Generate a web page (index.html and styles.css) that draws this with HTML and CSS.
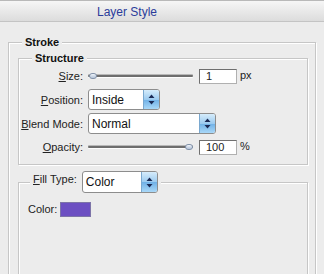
FILE: index.html
```html
<!DOCTYPE html>
<html>
<head>
<meta charset="utf-8">
<link rel="stylesheet" href="styles.css">
</head>
<body>
<div class="titlebar"><span class="title">Layer Style</span></div>
<div class="content">
  <fieldset class="group outer">
    <legend class="legend bold">Stroke</legend>
    <div class="outer-body">
      <fieldset class="group">
        <legend class="legend bold">Structure</legend>
        <div class="form">
          <label class="lbl"><u>S</u>ize:</label>
          <div class="ctrl">
            <div class="slider"><div class="track"></div><div class="thumb thumb-left"></div></div>
            <div class="num">1</div>
            <span class="unit">px</span>
          </div>
          <label class="lbl"><u>P</u>osition:</label>
          <div class="ctrl">
            <div class="select sel-pos"><span class="sel-text">Inside</span><span class="sel-btn"><svg width="7" height="11" viewBox="0 0 7 11"><path d="M3.5 0.5 L6.5 4 L0.5 4 Z M0.5 7 L6.5 7 L3.5 10.5 Z" fill="#1b2a55"/></svg></span></div>
          </div>
          <label class="lbl"><u>B</u>lend Mode:</label>
          <div class="ctrl">
            <div class="select sel-blend"><span class="sel-text">Normal</span><span class="sel-btn"><svg width="7" height="11" viewBox="0 0 7 11"><path d="M3.5 0.5 L6.5 4 L0.5 4 Z M0.5 7 L6.5 7 L3.5 10.5 Z" fill="#1b2a55"/></svg></span></div>
          </div>
          <label class="lbl"><u>O</u>pacity:</label>
          <div class="ctrl">
            <div class="slider slider-op"><div class="track"></div><div class="thumb thumb-right"></div></div>
            <div class="num">100</div>
            <span class="unit">%</span>
          </div>
        </div>
      </fieldset>
      <fieldset class="group fill">
        <legend class="legend fill-legend">
          <span class="fill-lbl"><u>F</u>ill Type:</span>
          <span class="select sel-fill"><span class="sel-text">Color</span><span class="sel-btn"><svg width="7" height="11" viewBox="0 0 7 11"><path d="M3.5 0.5 L6.5 4 L0.5 4 Z M0.5 7 L6.5 7 L3.5 10.5 Z" fill="#1b2a55"/></svg></span></span>
        </legend>
        <div class="fill-body">
          <span class="color-lbl">Color:</span>
          <span class="swatch"></span>
        </div>
      </fieldset>
    </div>
  </fieldset>
</div>
</body>
</html>
```
FILE: styles.css
```css
html, body {
  margin: 0;
  padding: 0;
  background: #ececec;
  overflow: hidden;
}
body {
  font-family: "Liberation Sans", Arial, sans-serif;
  font-size: 11px;
  color: #222;
  width: 324px;
  height: 274px;
}
u { text-decoration: underline; }

.titlebar {
  border-top: 1px solid #b9b9b9;
  border-bottom: 1px solid #c4c4c4;
  background: linear-gradient(#f6f6f6, #dcdcdc);
  height: 20px;
  padding-left: 97px;
}
.title {
  display: block;
  font-size: 12px;
  line-height: 23px;
  color: #2b3c9a;
}

.content {
  padding: 13px 8px 0 8px;
}

.group {
  margin: 0;
  padding: 0;
  border: 1px solid #c6c6c6;
  box-shadow: 1px 1px 0 #fff, inset 1px 1px 0 #fff;
  min-width: 0;
}
.legend {
  margin-left: 13px;
  padding: 0 3px;
  line-height: 14px;
  background: #ececec;
}
.bold { font-weight: bold; color: #111; }

.outer-body {
  padding: 2px 7px 0 9px;
}

.form {
  display: grid;
  grid-template-columns: 64px 1fr;
  column-gap: 5px;
  row-gap: 3px;
  padding: 1px 0 7px 0;
  align-items: center;
}
.lbl {
  text-align: right;
  white-space: nowrap;
}
.ctrl {
  display: flex;
  align-items: center;
  min-height: 20px;
}

.slider {
  position: relative;
  width: 105px;
  height: 8px;
  margin-right: 6px;
}
.track {
  position: absolute;
  left: 0;
  right: 0;
  top: 3px;
  height: 2px;
  background: #6e6e6e;
  border-radius: 1px;
  box-shadow: 0 1px 0 #fdfdfd, 0 -1px 0 #b8b8b8;
}
.thumb {
  position: absolute;
  top: 1px;
  width: 8px;
  height: 6px;
  border-radius: 3px;
  border: 1px solid #8393aa;
  box-sizing: border-box;
  background: linear-gradient(#eef3fa, #b4c3d8);
}
.thumb-left { left: 1px; }
.thumb-right { right: 0; }

.num {
  width: 38px;
  height: 15px;
  box-sizing: border-box;
  border: 1px solid #6f6f6f;
  border-right-color: #b0b0b0;
  border-bottom-color: #b0b0b0;
  background: #fff;
  line-height: 13px;
  padding-left: 6px;
  font-size: 11px;
}
.unit {
  margin-left: 3px;
  margin-top: -3px;
}

.select {
  display: flex;
  align-items: stretch;
  height: 21px;
  box-sizing: border-box;
  border: 1px solid #8d8d8d;
  border-radius: 3px;
  background: #fff;
  overflow: hidden;
}
.sel-pos { width: 72px; }
.sel-blend { width: 128px; }
.sel-fill { width: 76px; height: 22px; }
.sel-text {
  flex: 1;
  padding-left: 3px;
  line-height: 20px;
  font-size: 12px;
  color: #111;
}
.sel-btn {
  width: 15px;
  display: flex;
  align-items: center;
  justify-content: center;
  background: linear-gradient(#d6ecfb, #9ccbf0 50%, #6fb0e6 51%, #a9d8f8);
  border-left: 1px solid #7aa8cf;
}

.fill {
  margin-top: 6px;
}
.fill-legend {
  display: flex;
  align-items: center;
  margin-left: 11px;
  line-height: 14px;
}
.fill-lbl {
  margin-right: 5px;
  margin-top: -6px;
}
.fill-body {
  display: flex;
  align-items: flex-start;
  padding: 9px 0 0 9px;
  height: 78px;
}
.color-lbl {
  line-height: 15px;
  margin-right: 3px;
}
.swatch {
  width: 31px;
  height: 15px;
  box-sizing: border-box;
  background: #6c4fc2;
  border: 1px solid #7d74a8;
}
```
